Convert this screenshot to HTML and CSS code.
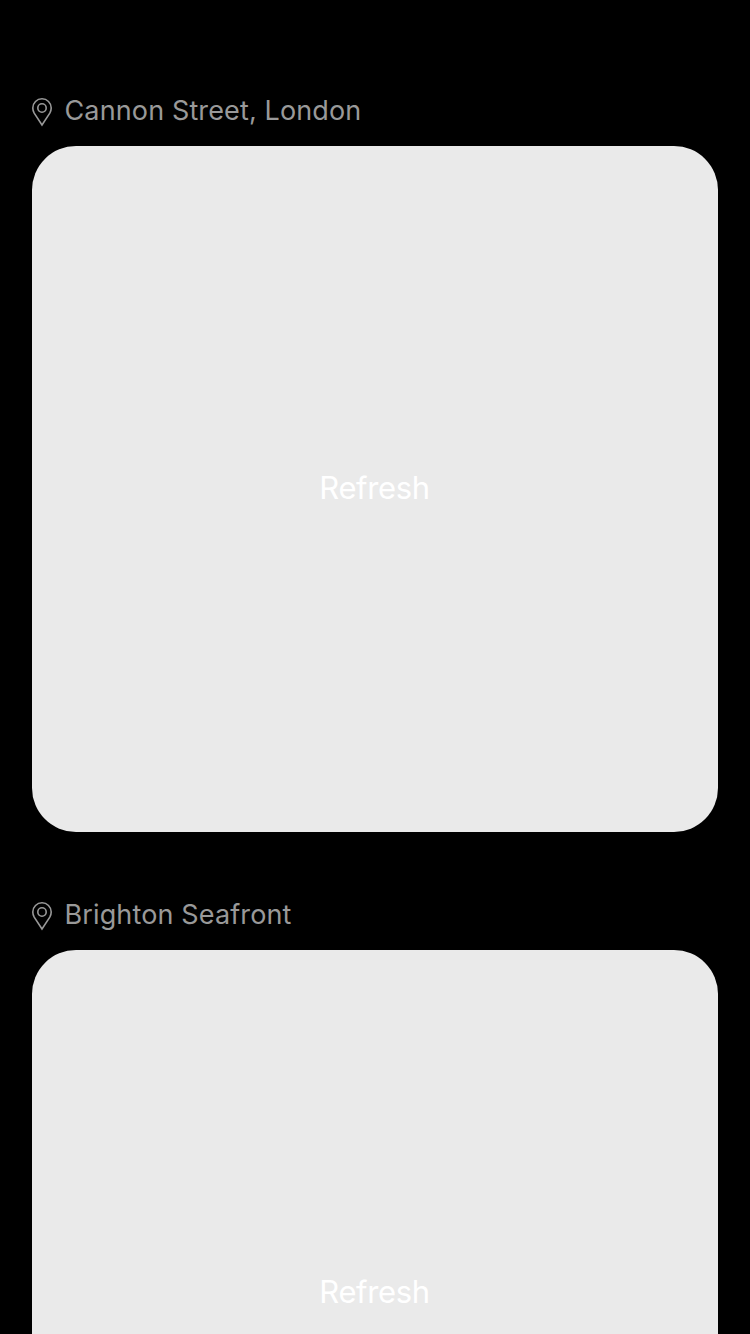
FILE: index.html
```html
<!DOCTYPE html>
<html lang="en">
<head>
<meta charset="utf-8">
<title>Places</title>
<link rel="stylesheet" href="styles.css">
</head>
<body>
<main class="feed">
  <section class="place">
    <header class="place-header">
      <svg class="pin" viewBox="0 0 20 28" aria-hidden="true"><path d="M10 27L2.200 15.200C1.300 13.600.8 11.900.8 10a9.200 9.200 0 0 1 18.400 0C19.200 11.900 18.700 13.600 17.800 15.200Z"/><circle cx="10" cy="10" r="4.200"/></svg>
      <h2 class="place-name">Cannon Street, London</h2>
    </header>
    <button class="card"><span class="refresh">Refresh</span></button>
  </section>
  <section class="place">
    <header class="place-header">
      <svg class="pin" viewBox="0 0 20 28" aria-hidden="true"><path d="M10 27L2.200 15.200C1.300 13.600.8 11.900.8 10a9.200 9.200 0 0 1 18.400 0C19.200 11.900 18.700 13.600 17.800 15.200Z"/><circle cx="10" cy="10" r="4.200"/></svg>
      <h2 class="place-name">Brighton Seafront</h2>
    </header>
    <button class="card"><span class="refresh">Refresh</span></button>
  </section>
</main>
</body>
</html>
```
FILE: styles.css
```css
html, body { margin: 0; height: 100%; overflow: hidden; background: #000; }
.feed {
  box-sizing: border-box;
  height: 1334px;
  padding: 90px 32px 0;
  overflow: hidden;
  font-family: Inter, sans-serif;
}
.place { margin-bottom: 62px; }
.place-header { display: flex; height: 56px; }
.pin {
  width: 20px;
  height: 28px;
  margin: 8px 12.5px 0 0;
  overflow: visible;
  fill: none;
  stroke: #999;
  stroke-width: 1.6;
}
.place-name {
  margin: 0;
  color: #999;
  font-size: 27px;
  font-weight: 400;
  line-height: 42px;
  letter-spacing: 0.13px;
  white-space: nowrap;
}
.card {
  display: flex;
  align-items: center;
  justify-content: center;
  box-sizing: border-box;
  width: 686px;
  height: 686px;
  padding: 0 1px 2px 0;
  border: 0;
  border-radius: 44px;
  background: #eaeaea;
  font: 400 31px/40px Inter, sans-serif;
  letter-spacing: -0.35px;
  color: #fff;
}
```
